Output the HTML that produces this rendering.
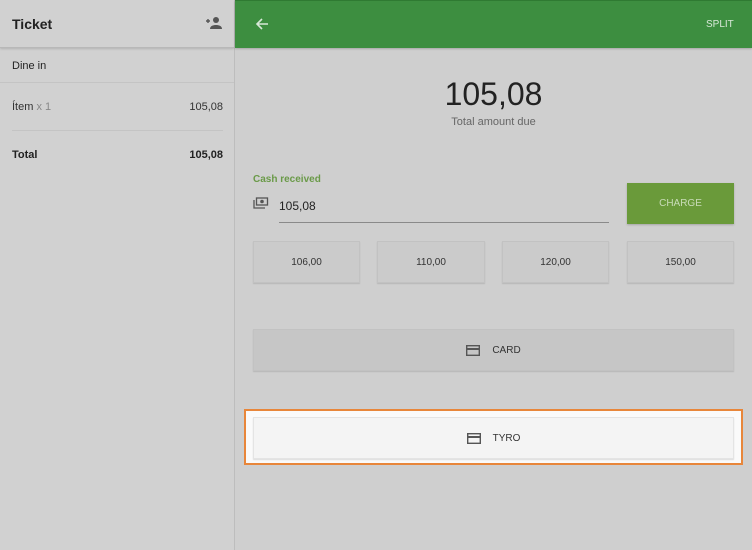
<!DOCTYPE html>
<html><head><style>
*{margin:0;padding:0;box-sizing:border-box}
body{width:752px;height:550px;background:#cfcfcf;font-family:"Liberation Sans",sans-serif;position:relative;overflow:hidden;color:#222}
.a{position:absolute}
.btn{position:absolute;background:#cbcbcb;border:1px solid #c2c2c2;box-shadow:0 1px 1px rgba(0,0,0,.12);font-size:10px;color:#333;display:flex;align-items:center;justify-content:center}
</style></head><body>
<div class="a" style="left:0;top:0;width:235px;height:550px;border-right:1px solid #bdbdbd;background:#d1d1d1"></div>
<div class="a" style="left:0;top:0;width:234px;height:48px;border-bottom:1px solid #b8b8b8;box-shadow:0 1px 2px rgba(0,0,0,.15)"></div>
<div class="a" style="left:12px;top:16px;font-size:14px;font-weight:bold;color:#222">Ticket</div>
<svg class="a" style="left:205px;top:16px" width="18" height="14" viewBox="0 0 18 14"><path d="M1 5h4M3 3v4" stroke="#555" stroke-width="1.4"/><circle cx="11" cy="4" r="3" fill="#555"/><path d="M5 13c0-3 3-4 6-4s6 1 6 4z" fill="#555"/></svg>
<div class="a" style="left:12px;top:60px;font-size:11px">Dine in</div>
<div class="a" style="left:0;top:82px;width:234px;height:1px;background:#c4c4c4"></div>
<div class="a" style="left:12px;top:101px;font-size:11px;color:#333">Ítem <span style="color:#888">x 1</span></div>
<div class="a" style="right:529px;top:101px;font-size:11px;color:#333">105,08</div>
<div class="a" style="left:12px;top:130px;width:211px;height:1px;background:#c4c4c4"></div>
<div class="a" style="left:12px;top:149px;font-size:11px;font-weight:bold">Total</div>
<div class="a" style="right:529px;top:149px;font-size:11px;font-weight:bold">105,08</div>

<div class="a" style="left:235px;top:0;width:517px;height:48px;background:#3d8e40;border-top:1px solid #2f7a32;box-shadow:0 1px 2px rgba(0,0,0,.2)"></div>
<svg class="a" style="left:255px;top:17px" width="14" height="14" viewBox="0 0 14 14"><path d="M13 7H2M7 2L2 7l5 5" stroke="#d8e8d8" stroke-width="1.6" fill="none"/></svg>
<div class="a" style="left:706px;top:19px;font-size:10px;color:#d8e8d8">SPLIT</div>

<div class="a" style="left:235px;top:76px;width:517px;text-align:center;font-size:32px;color:#222">105,08</div>
<div class="a" style="left:235px;top:116px;width:517px;text-align:center;font-size:11px;color:#666">Total amount due</div>

<div class="a" style="left:253px;top:174px;font-size:10px;font-weight:bold;color:#6a9a48">Cash received</div>
<svg class="a" style="left:253px;top:197px" width="16" height="12" viewBox="0 0 16 12"><rect x="3.5" y="1" width="11" height="7" fill="none" stroke="#555" stroke-width="1.3"/><circle cx="9" cy="4.5" r="1.8" fill="#555"/><path d="M1 3v8h11" fill="none" stroke="#555" stroke-width="1.3"/></svg>
<div class="a" style="left:279px;top:199px;font-size:12px;color:#222">105,08</div>
<div class="a" style="left:279px;top:222px;width:330px;height:1px;background:#8a8a8a"></div>
<div class="a" style="left:627px;top:183px;width:107px;height:41px;background:#6a9a3a;box-shadow:0 1px 2px rgba(0,0,0,.2);color:#c9dcb8;font-size:10px;display:flex;align-items:center;justify-content:center">CHARGE</div>

<div class="btn" style="left:253px;top:241px;width:107px;height:42px">106,00</div>
<div class="btn" style="left:377px;top:241px;width:108px;height:42px">110,00</div>
<div class="btn" style="left:502px;top:241px;width:107px;height:42px">120,00</div>
<div class="btn" style="left:627px;top:241px;width:107px;height:42px">150,00</div>

<div class="btn" style="left:253px;top:329px;width:481px;height:42px;background:#c6c6c6"><svg width="14" height="11" viewBox="0 0 14 11" style="margin-right:12px"><rect x="0.7" y="0.7" width="12.6" height="9.6" fill="none" stroke="#555" stroke-width="1.4"/><rect x="1" y="3" width="12" height="2" fill="#555"/></svg>CARD</div>

<div class="a" style="left:244px;top:409px;width:499px;height:56px;border:2px solid #e8863a;background:#fafafa"></div>
<div class="btn" style="left:253px;top:417px;width:481px;height:42px;background:#f4f4f4;border-color:#e4e4e4"><svg width="14" height="11" viewBox="0 0 14 11" style="margin-right:12px"><rect x="0.7" y="0.7" width="12.6" height="9.6" fill="none" stroke="#555" stroke-width="1.4"/><rect x="1" y="3" width="12" height="2" fill="#555"/></svg>TYRO</div>
</body></html>
